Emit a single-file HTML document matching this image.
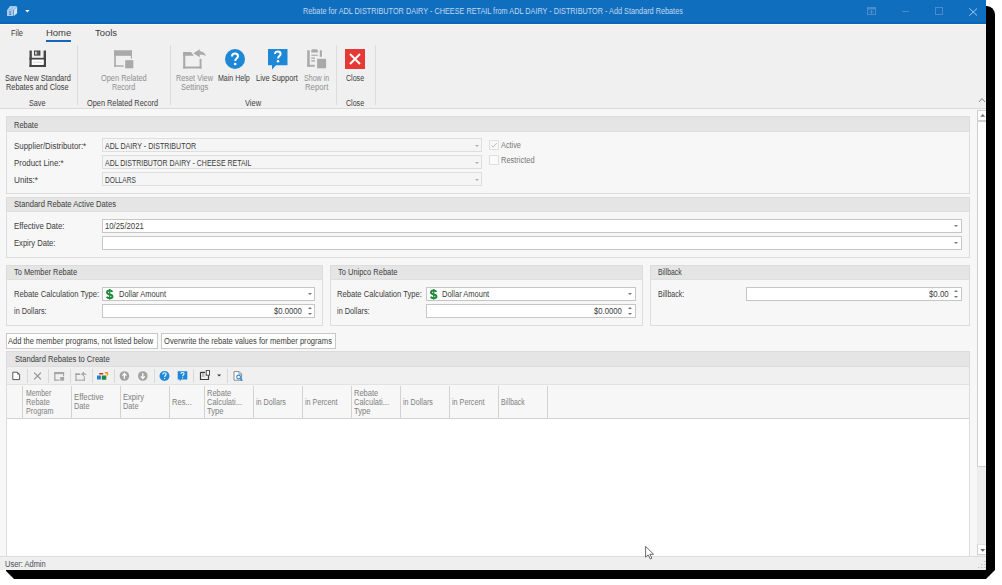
<!DOCTYPE html>
<html><head><meta charset="utf-8">
<style>
*{box-sizing:border-box;margin:0;padding:0}
html,body{width:1002px;height:585px;overflow:hidden;background:#fff}
body{position:relative;font-family:"Liberation Sans",sans-serif;font-size:7.6px;color:#3c3c3c}
.a{position:absolute}
.t{position:absolute;white-space:nowrap;line-height:1;transform-origin:0 0}
#win{position:absolute;left:0;top:0;width:986px;height:570px;background:#f7f7f7;overflow:hidden}
#shadow{position:absolute;left:0;top:0;width:1002px;height:585px;background:#000;clip-path:polygon(6px 6px,987px 6px,990px 6.8px,992.5px 8.5px,994.2px 11px,995px 14px,995px 570px,986px 579px,14px 579px,6px 571px)}
#title{position:absolute;left:0;top:0;width:986px;height:22px;background:#106ebe}
#title2{position:absolute;left:0;top:22px;width:986px;height:2px;background:#0a66ba}
#title3{position:absolute;left:0;top:24px;width:986px;height:1px;background:#fcf7ef}
#ribbon{position:absolute;left:0;top:25px;width:986px;height:83px;background:#f0f0f0}
#ribline{position:absolute;left:0;top:108px;width:986px;height:1px;background:#dadada}
.sep{position:absolute;top:45px;width:1px;height:60px;background:#dcdcdc}
.rl{color:#3c3c3c;font-size:7.5px}
.dis{color:#a2a2a2}
.grp{position:absolute;background:#f7f7f7;border:1px solid #dcdcdc}
.gh{position:absolute;left:0;top:0;right:0;height:15px;background:#e5e5e5;border-bottom:1px solid #dedede}
.gh span{position:absolute;left:7px;top:4px;white-space:nowrap;line-height:1;color:#3c3c3c}
.inp{position:absolute;background:#fff;border:1px solid #c6c6c6;height:14px}
.ro{background:#f5f5f5;border-color:#dedede}
.inp span{position:absolute;top:3px;white-space:nowrap;line-height:1;color:#3c3c3c}
.arr{position:absolute;width:0;height:0;border-left:2.5px solid transparent;border-right:2.5px solid transparent;border-top:2.5px solid #777}
.btn{position:absolute;height:16px;background:#fff;border:1px solid #c8c8c8}
.btn span{position:absolute;left:2px;top:4px;white-space:nowrap;line-height:1;color:#3c3c3c}
.inp span.dol{font-weight:bold;color:#1c8c3c;font-size:11px}
.hdr{color:#8a8a8a}
.lbl{position:absolute;white-space:nowrap;line-height:1;color:#4a4a4a}
</style></head><body>
<div id="shadow"></div>
<div id="win">
  <div id="title"></div><div id="title2"></div><div id="title3"></div>
  <div id="ribbon"></div><div id="ribline"></div>
  <!-- title bar icons -->
  <svg class="a" style="left:0;top:0" width="40" height="25" viewBox="0 0 40 25">
    <path d="M7 10 L10 6 H17.1 L14 10 Z" fill="#8fbce9"/>
    <path d="M8.2 9.2 L10.6 6.4 H12.6 L10.2 9.2 Z M11.8 9.2 L14.2 6.4 H16.2 L13.8 9.2 Z" fill="#b9d6f3"/>
    <path d="M13.9 10 L17.1 6.5 V13.3 L13.9 16 Z" fill="#cfe3f7"/>
    <rect x="7" y="10" width="6.4" height="6" fill="#a9cbee"/>
    <path d="M9.2 11.2 h1.8 v1.3 h-1.2 v0.8 h1.2 v1.6 h-1.8 v-1.2 h1.2 v-0.6 h-1.2 Z" fill="#3f86cf"/>
    <path d="M25.2 10 H29.6 L27.4 12.4 Z" fill="#fff"/>
  </svg>
  
  <svg class="a" style="left:867px;top:7px" width="9" height="8" viewBox="0 0 9 8"><rect x="0.5" y="0.5" width="8" height="7" fill="none" stroke="#4d8acb" stroke-width="1"/><rect x="0.5" y="0.5" width="8" height="2" fill="#4d8acb"/><path d="M4.5 3 v4 M2.5 5 h4" stroke="#4d8acb" stroke-width="1"/></svg>
  <div class="a" style="left:902px;top:11px;width:7px;height:1px;background:#4d8acb"></div>
  <div class="a" style="left:935px;top:7px;width:8px;height:8px;border:1px solid #4d8acb"></div>
  <svg class="a" style="left:968.5px;top:7.5px" width="8.5" height="8" viewBox="0 0 8.5 8"><path d="M0.3 0.3 L8.2 7.7 M8.2 0.3 L0.3 7.7" stroke="#b3cfec" stroke-width="0.9"/></svg>

  <!-- tabs -->
  <div class="a" style="left:46px;top:40px;width:25px;height:2px;background:#1565c0"></div>

  <!-- separators -->
  <div class="sep" style="left:77px"></div>
  <div class="sep" style="left:170px"></div>
  <div class="sep" style="left:336px"></div>
  <div class="sep" style="left:375px"></div>

  <!-- Save -->
  <svg class="a" style="left:25px;top:46px" width="25" height="25" viewBox="0 0 25 25"><g fill="#454545">
    <rect x="4.5" y="4.5" width="2.3" height="16.5"/><rect x="18.6" y="4.5" width="2.4" height="16.5"/>
    <rect x="4.5" y="11.8" width="16.5" height="1.9"/><rect x="4.5" y="18.8" width="16.5" height="2.2"/>
    <rect x="9" y="4.5" width="6.4" height="5.1"/></g>
    <rect x="6.8" y="13.7" width="11.8" height="5.1" fill="#fff"/><rect x="8" y="15.8" width="9" height="0.8" fill="#d0d0d0"/>
    <rect x="10.2" y="5.6" width="1.4" height="2.9" fill="#fff"/><rect x="12.4" y="5.6" width="1.2" height="2.9" fill="#777"/>
  </svg>

  <!-- Open Related -->
  <svg class="a" style="left:110px;top:45px" width="25" height="25" viewBox="0 0 25 25"><g fill="#a9a9a9">
    <rect x="4.2" y="5.3" width="17.7" height="5.5"/><rect x="4.2" y="5.3" width="1.6" height="16.4"/>
    <rect x="4.2" y="20.3" width="9.4" height="1.4"/><rect x="20.8" y="5.3" width="1.1" height="8.3"/>
    <rect x="15.2" y="15.2" width="8.1" height="8.1"/></g>
  </svg>

  <!-- Reset View -->
  <svg class="a" style="left:180px;top:45px" width="30" height="27" viewBox="0 0 30 27"><g fill="#a9a9a9">
    <rect x="3.2" y="6.9" width="2.1" height="16.6"/><rect x="3.2" y="21.5" width="18.3" height="2"/>
    <rect x="19.6" y="13.8" width="1.9" height="9.7"/><path d="M3.2 6.9 H11 L13.8 10.8 H3.2 Z"/>
    <path d="M13.4 8.3 L19.8 4.2 V12.2 Z"/><path d="M19.5 6.3 C23 6.3 25.5 8.5 25.8 11.3 C24 9.8 22 9.5 19.5 9.8 Z"/></g>
  </svg>

  <!-- Main Help -->
  <svg class="a" style="left:225px;top:49px" width="20" height="20" viewBox="0 0 20 20">
    <circle cx="10" cy="10" r="10" fill="#1e88d6"/>
    <path d="M7 7.5 C7 5.5 8.3 4.5 10 4.5 C11.8 4.5 13 5.6 13 7.2 C13 9.3 10.2 9.5 10.2 12" fill="none" stroke="#fff" stroke-width="2"/>
    <circle cx="10.2" cy="15" r="1.3" fill="#fff"/>
  </svg>

  <!-- Live Support -->
  <svg class="a" style="left:268px;top:49px" width="20" height="21" viewBox="0 0 20 21">
    <path d="M0 0 H19.5 V16.3 H8 L4 20.5 L4 16.3 H0 Z" fill="#1e88d6"/>
    <path d="M7 5 C7 3.2 8.2 2.5 9.8 2.5 C11.5 2.5 12.6 3.5 12.6 5 C12.6 7 10 7.2 10 9.5" fill="none" stroke="#fff" stroke-width="1.9"/>
    <circle cx="10" cy="12.3" r="1.2" fill="#fff"/>
  </svg>

  <!-- Show in Report -->
  <svg class="a" style="left:303px;top:45px" width="30" height="27" viewBox="0 0 30 27"><g fill="#a9a9a9">
    <rect x="4.2" y="5.3" width="2.5" height="16.4"/><rect x="4.2" y="19.8" width="7.6" height="1.9"/>
    <path d="M8.3 7.6 V5.6 Q8.3 4.2 10 4.2 H13.1 Q14.8 4.2 14.8 5.6 V7.6 Z"/>
    <rect x="8.3" y="9.7" width="6.5" height="1.1"/><rect x="8.3" y="12.5" width="3.7" height="1.3"/><rect x="8.3" y="15.2" width="3.7" height="1.4"/>
    <rect x="16.8" y="5.3" width="2.1" height="6.5"/><rect x="14.1" y="13.8" width="9" height="9.5"/></g>
  </svg>

  <!-- Close -->
  <svg class="a" style="left:345px;top:49px" width="20" height="20" viewBox="0 0 20 20">
    <rect width="20" height="20" fill="#e53935"/>
    <path d="M5 5 L15 15 M15 5 L5 15" stroke="#fff" stroke-width="2"/>
  </svg>

  <svg class="a" style="left:978px;top:97px" width="8" height="6" viewBox="0 0 8 6"><path d="M1 5 L4 1.5 L7 5" fill="none" stroke="#888" stroke-width="1"/></svg>

  <!-- scrollbar -->
    <div class="a" style="left:977px;top:110px;width:9px;height:446px;background:#ededed"></div>
  <div class="a" style="left:977px;top:110px;width:9px;height:11px;background:#fff;border:1px solid #cfcfcf;border-right:0"></div>
  <svg class="a" style="left:977px;top:110px" width="9" height="11" viewBox="977 110 9 11"><path d="M980.3 116.8 H985.2 L982.75 114 Z" fill="#6a6a6a"/></svg>
  <div class="a" style="left:977px;top:121px;width:9px;height:346px;background:#fff;border:1px solid #cfcfcf;border-right:0"></div>
  <div class="a" style="left:977px;top:544px;width:9px;height:11px;background:#fff;border:1px solid #d0d0d0;border-right:0;border-top-color:#e0e0e0"></div>
  <svg class="a" style="left:977px;top:544px" width="9" height="11" viewBox="977 544 9 11"><path d="M980.3 549 H985.2 L982.75 551.8 Z" fill="#6a6a6a"/></svg>

  <!-- Group 1 Rebate -->
  <div class="grp" style="left:6px;top:116px;width:964px;height:78px"><div class="gh"></div></div>
  <div class="inp ro" style="left:102px;top:138px;width:380px"><div class="arr" style="left:371.5px;top:6px;border-top-color:#b0b0b0;border-left-width:2px;border-right-width:2px;border-top-width:2px"></div></div>
  <div class="inp ro" style="left:102px;top:155px;width:380px"><div class="arr" style="left:371.5px;top:6px;border-top-color:#b0b0b0;border-left-width:2px;border-right-width:2px;border-top-width:2px"></div></div>
  <div class="inp ro" style="left:102px;top:172px;width:380px"><div class="arr" style="left:371.5px;top:6px;border-top-color:#b0b0b0;border-left-width:2px;border-right-width:2px;border-top-width:2px"></div></div>
  <div class="a" style="left:489px;top:140px;width:10px;height:10px;background:#f7f7f7;border:1px solid #e0e0e0"></div>
  <svg class="a" style="left:490px;top:141px" width="8" height="8" viewBox="0 0 8 8"><path d="M1.5 4.5 L3.2 6 L6.8 2" fill="none" stroke="#b5b5b5" stroke-width="0.9"/></svg>
  <div class="a" style="left:489px;top:155px;width:10px;height:10px;background:#fbfbfb;border:1px solid #e0e0e0"></div>

  <!-- Group 2 Dates -->
  <div class="grp" style="left:6px;top:197px;width:964px;height:61px"><div class="gh" style="height:14px"></div></div>
  <div class="inp" style="left:102px;top:219px;width:860px"><div class="arr" style="left:851px;top:5.3px"></div></div>
  <div class="inp" style="left:102px;top:236px;width:860px"><div class="arr" style="left:851px;top:5.3px"></div></div>

  <!-- Group 3 -->
  <div class="grp" style="left:6px;top:265px;width:317px;height:61px"><div class="gh" style="height:14px"></div></div>
  <div class="inp" style="left:102px;top:287px;width:213px"><div class="arr" style="left:204.5px;top:5.3px"></div></div>
  <div class="inp" style="left:102px;top:304px;width:213px"><div class="arr" style="left:204.5px;top:2px;border-top:0;border-bottom:2px solid #777"></div><div class="arr" style="left:204.5px;top:8px;border-top-width:2px"></div></div>

  <svg class="a" style="left:104px;top:287.6px" width="12" height="13" viewBox="104 287.6 12 13"><path d="M112.4 291.5 C111.9 290.5 111 290.1 109.7 290.1 C108 290.1 107 290.90000000000003 107 292.1 C107 293.40000000000003 108.2 293.70000000000005 109.7 294.0 C111.3 294.3 112.5 294.8 112.5 296.1 C112.5 297.3 111.4 297.90000000000003 109.7 297.90000000000003 C108.3 297.90000000000003 107.3 297.40000000000003 106.7 296.40000000000003" fill="none" stroke="#1f8b3b" stroke-width="2"/><path d="M109.7 288.6 V299.1" stroke="#1f8b3b" stroke-width="1.3"/></svg>
  <!-- Group 4 -->
  <div class="grp" style="left:330px;top:265px;width:313px;height:61px"><div class="gh" style="height:14px"></div></div>
  <div class="inp" style="left:426px;top:287px;width:210px"><div class="arr" style="left:201px;top:5.3px"></div></div>
  <div class="inp" style="left:426px;top:304px;width:210px"><div class="arr" style="left:201px;top:2px;border-top:0;border-bottom:2px solid #777"></div><div class="arr" style="left:201px;top:8px;border-top-width:2px"></div></div>

  <svg class="a" style="left:428px;top:287.6px" width="12" height="13" viewBox="428 287.6 12 13"><path d="M436.4 291.5 C435.9 290.5 435 290.1 433.7 290.1 C432 290.1 431 290.90000000000003 431 292.1 C431 293.40000000000003 432.2 293.70000000000005 433.7 294.0 C435.3 294.3 436.5 294.8 436.5 296.1 C436.5 297.3 435.4 297.90000000000003 433.7 297.90000000000003 C432.3 297.90000000000003 431.3 297.40000000000003 430.7 296.40000000000003" fill="none" stroke="#1f8b3b" stroke-width="2"/><path d="M433.7 288.6 V299.1" stroke="#1f8b3b" stroke-width="1.3"/></svg>
  <!-- Group 5 -->
  <div class="grp" style="left:650px;top:265px;width:320px;height:61px"><div class="gh" style="height:14px"></div></div>
  <div class="inp" style="left:746px;top:287px;width:216px"><div class="arr" style="left:207px;top:2px;border-top:0;border-bottom:2px solid #777"></div><div class="arr" style="left:207px;top:8px;border-top-width:2px"></div></div>

  <!-- buttons -->
  <div class="btn" style="left:6px;top:333px;width:152px"></div>
  <div class="btn" style="left:161px;top:333px;width:175px"></div>

  <!-- Grid group -->
  <div class="grp" style="left:6px;top:351px;width:964px;height:206px;background:#fff"><div class="gh"></div></div>
  <div class="a" style="left:7px;top:367px;width:962px;height:18px;background:#f0f0f0;border-bottom:1px solid #e2e2e2"></div>
  <div class="a" style="left:7px;top:385px;width:962px;height:34px;background:#f7f7f7;border-bottom:1px solid #d2d2d2"></div>

  <!-- columns -->
  <div class="a" style="left:22px;top:386px;width:1px;height:32px;background:#d2d2d2"></div>
  <div class="a" style="left:71px;top:386px;width:1px;height:32px;background:#d2d2d2"></div>
  <div class="a" style="left:120px;top:386px;width:1px;height:32px;background:#d2d2d2"></div>
  <div class="a" style="left:169px;top:386px;width:1px;height:32px;background:#d2d2d2"></div>
  <div class="a" style="left:204px;top:386px;width:1px;height:32px;background:#d2d2d2"></div>
  <div class="a" style="left:253px;top:386px;width:1px;height:32px;background:#d2d2d2"></div>
  <div class="a" style="left:302px;top:386px;width:1px;height:32px;background:#d2d2d2"></div>
  <div class="a" style="left:351px;top:386px;width:1px;height:32px;background:#d2d2d2"></div>
  <div class="a" style="left:400px;top:386px;width:1px;height:32px;background:#d2d2d2"></div>
  <div class="a" style="left:449px;top:386px;width:1px;height:32px;background:#d2d2d2"></div>
  <div class="a" style="left:498px;top:386px;width:1px;height:32px;background:#d2d2d2"></div>
  <div class="a" style="left:547px;top:386px;width:1px;height:32px;background:#d2d2d2"></div>
  <div class="a" style="left:27px;top:369px;width:1px;height:14px;background:#d9d9d9"></div>
  <div class="a" style="left:48px;top:369px;width:1px;height:14px;background:#d9d9d9"></div>
  <div class="a" style="left:70px;top:369px;width:1px;height:14px;background:#d9d9d9"></div>
  <div class="a" style="left:92px;top:369px;width:1px;height:14px;background:#d9d9d9"></div>
  <div class="a" style="left:114px;top:369px;width:1px;height:14px;background:#d9d9d9"></div>
  <div class="a" style="left:154px;top:369px;width:1px;height:14px;background:#d9d9d9"></div>
  <div class="a" style="left:193px;top:369px;width:1px;height:14px;background:#d9d9d9"></div>
  <div class="a" style="left:227px;top:369px;width:1px;height:14px;background:#d9d9d9"></div>

  <!-- toolbar icons -->
  <svg class="a" style="left:0;top:366px" width="250" height="20" viewBox="0 366 250 20">
    <path d="M12.8 372.2 H17.4 L19.6 374.4 V379.6 H12.8 Z" fill="#fff" stroke="#505050" stroke-width="0.95" stroke-linejoin="round"/>
    <path d="M17.3 371.9 L19.9 374.5 H17.3 Z" fill="#505050"/>
    <path d="M34.2 372.6 L40.9 379.3 M40.9 372.6 L34.2 379.3" stroke="#8c8c8c" stroke-width="1.1"/>
    <g fill="#a6a6a6">
      <rect x="54.2" y="372" width="9.9" height="2.1"/><rect x="54.2" y="372" width="1.3" height="8.7"/>
      <rect x="54.2" y="379.5" width="5.3" height="1.2"/><rect x="63" y="372" width="1.1" height="4.3"/>
      <rect x="60.2" y="377" width="3.9" height="3.7"/>
      <rect x="75.4" y="373.5" width="1.2" height="7.2"/><rect x="75.4" y="379.6" width="9.5" height="1.1"/>
      <rect x="83.8" y="376.2" width="1.1" height="4.5"/><path d="M75.4 373.3 H79.5 L80.8 375.1 H75.4 Z"/>
      <path d="M81 374.1 L84 371.4 V376.6 Z"/><path d="M83.8 372.9 C85.5 372.9 86.5 373.8 86.6 375.6 C85.8 374.8 85 374.6 83.8 374.6 Z"/>
    </g>
    <rect x="97" y="375.6" width="3.9" height="3.9" rx="0.5" fill="#1e7fd6"/>
    <rect x="101.8" y="375.6" width="4.5" height="4.2" rx="0.5" fill="#1f8a3a"/>
    <rect x="99.1" y="372.9" width="4.2" height="1.5" rx="0.7" fill="#e02020"/>
    <path d="M104.8 372 H108.1 V375.6 H106.7 V373.4 H104.8 Z" fill="#f7931e"/>
    <circle cx="124.4" cy="376" r="4.8" fill="#a3a3a3"/>
    <path d="M124.4 378.8 V374 M122.4 375.6 L124.4 373.4 L126.4 375.6" fill="none" stroke="#fff" stroke-width="1.3"/>
    <circle cx="142.8" cy="376" r="4.8" fill="#a3a3a3"/>
    <path d="M142.8 373.2 V378 M140.8 376.4 L142.8 378.6 L144.8 376.4" fill="none" stroke="#fff" stroke-width="1.3"/>
    <circle cx="164.5" cy="376" r="5" fill="#1e88d6"/>
    <path d="M162.8 374.6 C162.8 373.4 163.6 372.8 164.5 372.8 C165.5 372.8 166.2 373.4 166.2 374.3 C166.2 375.5 164.6 375.6 164.6 377.1" fill="none" stroke="#fff" stroke-width="1.1"/>
    <circle cx="164.6" cy="378.6" r="0.7" fill="#fff"/>
    <path d="M177.7 371.2 H187.3 V379.6 H181.3 L179.8 381.2 V379.6 H177.7 Z" fill="#1e88d6"/>
    <path d="M180.9 373.9 C180.9 372.9 181.6 372.4 182.5 372.4 C183.4 372.4 184.1 373 184.1 373.8 C184.1 374.9 182.6 375 182.6 376.3" fill="none" stroke="#fff" stroke-width="1.05"/>
    <circle cx="182.6" cy="377.8" r="0.65" fill="#fff"/>
    <path d="M200.5 372.3 H205 M200.5 372.3 V379.5 H208.5 V375.2" fill="none" stroke="#3a3a3a" stroke-width="1.2"/>
    <rect x="206.2" y="370.6" width="3.3" height="4.6" fill="#fff" stroke="#3a3a3a" stroke-width="0.9"/>
    <path d="M202 374 H204.5 M202 376 H204.5" stroke="#777" stroke-width="0.8"/>
    <path d="M217.2 374.4 H221.1 L219.15 376.6 Z" fill="#333"/>
    <path d="M234 371.6 H239.2 L241.6 374 V380.2 H234 Z" fill="#fff" stroke="#8a8a8a" stroke-width="1"/>
    <path d="M239 371.6 V374.2 H241.6" fill="none" stroke="#8a8a8a" stroke-width="0.8"/>
    <circle cx="238.6" cy="377" r="1.9" fill="none" stroke="#2a8ad8" stroke-width="1.1"/>
    <path d="M240 378.4 L242.3 380.7" stroke="#2a8ad8" stroke-width="1.3"/>
  </svg>



  <!-- status bar -->
  <div class="a" style="left:0;top:556px;width:986px;height:14px;background:#efefef;border-top:1px solid #dcdcdc"></div>
  <!-- grip -->
  <svg class="a" style="left:970px;top:556px" width="16" height="14" viewBox="970 556 16 14"><g fill="#b0b0b0">
    <rect x="984.4" y="561" width="1" height="1"/><rect x="981.4" y="564" width="1" height="1"/><rect x="984.4" y="564" width="1" height="1"/>
    <rect x="978.2" y="567" width="1" height="1"/><rect x="981.4" y="567" width="1" height="1"/><rect x="984.4" y="567" width="1" height="1"/></g></svg>

  <!-- cursor -->
  <svg class="a" style="left:640px;top:540px;z-index:5" width="20" height="22" viewBox="640 540 20 22"><path d="M645.6 546.4 V557.2 L648.1 554.9 L650.3 559 L651.9 558.2 L649.8 554.3 H653.6 Z" fill="#fff" stroke="#5a5a5a" stroke-width="0.9" stroke-linejoin="round"/></svg>
  <div class="t" style="left:303.00px;top:7.12px;font-size:8.6px;transform:scaleX(0.8482);color:#c2d8f0">Rebate for ADL DISTRIBUTOR DAIRY - CHEESE RETAIL from ADL DAIRY - DISTRIBUTOR - Add Standard Rebates</div>
  <div class="t" style="left:10.60px;top:29.40px;font-size:9.1px;transform:scaleX(0.8133);color:#3b3b3b">File</div>
  <div class="t" style="left:46.00px;top:29.40px;font-size:9.1px;transform:scaleX(1.0417);color:#3b3b3b">Home</div>
  <div class="t" style="left:95.10px;top:29.40px;font-size:9.1px;transform:scaleX(1.0333);color:#3b3b3b">Tools</div>
  <div class="t" style="left:4.70px;top:74.17px;font-size:8.3px;transform:scaleX(0.8919);color:#3b3b3b">Save New Standard</div>
  <div class="t" style="left:5.70px;top:83.07px;font-size:8.3px;transform:scaleX(0.8859);color:#3b3b3b">Rebates and Close</div>
  <div class="t" style="left:29.00px;top:99.07px;font-size:8.3px;transform:scaleX(0.8684);color:#3b3b3b">Save</div>
  <div class="t" style="left:100.50px;top:74.17px;font-size:8.3px;transform:scaleX(0.8922);color:#8f8f8f">Open Related</div>
  <div class="t" style="left:111.50px;top:83.07px;font-size:8.3px;transform:scaleX(0.8704);color:#8f8f8f">Record</div>
  <div class="t" style="left:87.20px;top:99.07px;font-size:8.3px;transform:scaleX(0.8852);color:#3b3b3b">Open Related Record</div>
  <div class="t" style="left:175.70px;top:74.17px;font-size:8.3px;transform:scaleX(0.8833);color:#8f8f8f">Reset View</div>
  <div class="t" style="left:180.80px;top:83.07px;font-size:8.3px;transform:scaleX(0.9067);color:#8f8f8f">Settings</div>
  <div class="t" style="left:218.40px;top:74.17px;font-size:8.3px;transform:scaleX(0.8500);color:#3b3b3b">Main Help</div>
  <div class="t" style="left:244.80px;top:99.07px;font-size:8.3px;transform:scaleX(0.9000);color:#3b3b3b">View</div>
  <div class="t" style="left:256.20px;top:74.17px;font-size:8.3px;transform:scaleX(0.8979);color:#3b3b3b">Live Support</div>
  <div class="t" style="left:303.80px;top:74.17px;font-size:8.3px;transform:scaleX(0.8533);color:#8f8f8f">Show in</div>
  <div class="t" style="left:305.10px;top:83.07px;font-size:8.3px;transform:scaleX(0.9360);color:#8f8f8f">Report</div>
  <div class="t" style="left:346.00px;top:74.17px;font-size:8.3px;transform:scaleX(0.8524);color:#3b3b3b">Close</div>
  <div class="t" style="left:346.00px;top:99.07px;font-size:8.3px;transform:scaleX(0.8524);color:#3b3b3b">Close</div>
  <div class="t" style="left:14.00px;top:120.57px;font-size:8.3px;transform:scaleX(0.9000);color:#3b3b3b">Rebate</div>
  <div class="t" style="left:13.50px;top:142.07px;font-size:8.3px;transform:scaleX(0.9487);color:#3b3b3b">Supplier/Distributor:*</div>
  <div class="t" style="left:13.50px;top:158.87px;font-size:8.3px;transform:scaleX(0.9519);color:#3b3b3b">Product Line:*</div>
  <div class="t" style="left:13.50px;top:175.67px;font-size:8.3px;transform:scaleX(0.9840);color:#3b3b3b">Units:*</div>
  <div class="t" style="left:104.60px;top:142.07px;font-size:8.3px;transform:scaleX(0.8533);color:#3b3b3b">ADL DAIRY - DISTRIBUTOR</div>
  <div class="t" style="left:104.60px;top:158.87px;font-size:8.3px;transform:scaleX(0.8425);color:#3b3b3b">ADL DISTRIBUTOR DAIRY - CHEESE RETAIL</div>
  <div class="t" style="left:104.60px;top:175.67px;font-size:8.3px;transform:scaleX(0.7974);color:#3b3b3b">DOLLARS</div>
  <div class="t" style="left:500.50px;top:141.07px;font-size:8.3px;transform:scaleX(0.8826);color:#767676">Active</div>
  <div class="t" style="left:500.50px;top:156.37px;font-size:8.3px;transform:scaleX(0.8974);color:#767676">Restricted</div>
  <div class="t" style="left:14.40px;top:200.27px;font-size:8.3px;transform:scaleX(0.9171);color:#3b3b3b">Standard Rebate Active Dates</div>
  <div class="t" style="left:13.60px;top:222.27px;font-size:8.3px;transform:scaleX(0.9389);color:#3b3b3b">Effective Date:</div>
  <div class="t" style="left:13.60px;top:239.07px;font-size:8.3px;transform:scaleX(0.9178);color:#3b3b3b">Expiry Date:</div>
  <div class="t" style="left:105.40px;top:222.27px;font-size:8.3px;transform:scaleX(0.9341);color:#3b3b3b">10/25/2021</div>
  <div class="t" style="left:14.40px;top:268.07px;font-size:8.3px;transform:scaleX(0.8930);color:#3b3b3b">To Member Rebate</div>
  <div class="t" style="left:13.60px;top:290.27px;font-size:8.3px;transform:scaleX(0.9196);color:#3b3b3b">Rebate Calculation Type:</div>
  <div class="t" style="left:13.60px;top:306.97px;font-size:8.3px;transform:scaleX(0.8838);color:#3b3b3b">in Dollars:</div>
  <div class="t" style="left:118.80px;top:290.37px;font-size:8.3px;transform:scaleX(0.9019);color:#3b3b3b">Dollar Amount</div>
  <div class="t" style="left:274.00px;top:307.17px;font-size:8.3px;transform:scaleX(0.9300);color:#3b3b3b">$0.0000</div>
  <div class="t" style="left:338.00px;top:268.07px;font-size:8.3px;transform:scaleX(0.9015);color:#3b3b3b">To Unipco Rebate</div>
  <div class="t" style="left:337.40px;top:290.27px;font-size:8.3px;transform:scaleX(0.9174);color:#3b3b3b">Rebate Calculation Type:</div>
  <div class="t" style="left:337.40px;top:306.97px;font-size:8.3px;transform:scaleX(0.8838);color:#3b3b3b">in Dollars:</div>
  <div class="t" style="left:442.20px;top:290.37px;font-size:8.3px;transform:scaleX(0.9058);color:#3b3b3b">Dollar Amount</div>
  <div class="t" style="left:594.20px;top:307.17px;font-size:8.3px;transform:scaleX(0.9300);color:#3b3b3b">$0.0000</div>
  <div class="t" style="left:658.20px;top:267.97px;font-size:8.3px;transform:scaleX(0.8276);color:#3b3b3b">Billback</div>
  <div class="t" style="left:657.80px;top:290.17px;font-size:8.3px;transform:scaleX(0.8484);color:#3b3b3b">Billback:</div>
  <div class="t" style="left:928.80px;top:290.37px;font-size:8.3px;transform:scaleX(0.9476);color:#3b3b3b">$0.00</div>
  <div class="t" style="left:8.20px;top:336.87px;font-size:8.3px;transform:scaleX(0.9043);color:#3b3b3b">Add the member programs, not listed below</div>
  <div class="t" style="left:163.60px;top:336.87px;font-size:8.3px;transform:scaleX(0.9152);color:#3b3b3b">Overwrite the rebate values for member programs</div>
  <div class="t" style="left:14.50px;top:354.87px;font-size:8.3px;transform:scaleX(0.9165);color:#3b3b3b">Standard Rebates to Create</div>
  <div class="t" style="left:25.60px;top:389.17px;font-size:8.3px;transform:scaleX(0.8290);color:#808080">Member</div>
  <div class="t" style="left:25.60px;top:397.87px;font-size:8.3px;transform:scaleX(0.8889);color:#808080">Rebate</div>
  <div class="t" style="left:25.60px;top:406.57px;font-size:8.3px;transform:scaleX(0.8656);color:#808080">Program</div>
  <div class="t" style="left:74.40px;top:393.27px;font-size:8.3px;transform:scaleX(0.9344);color:#808080">Effective</div>
  <div class="t" style="left:74.40px;top:402.17px;font-size:8.3px;transform:scaleX(0.8833);color:#808080">Date</div>
  <div class="t" style="left:123.40px;top:393.27px;font-size:8.3px;transform:scaleX(0.9130);color:#808080">Expiry</div>
  <div class="t" style="left:123.40px;top:402.17px;font-size:8.3px;transform:scaleX(0.8833);color:#808080">Date</div>
  <div class="t" style="left:172.00px;top:398.37px;font-size:8.3px;transform:scaleX(0.9143);color:#808080">Res...</div>
  <div class="t" style="left:207.30px;top:389.17px;font-size:8.3px;transform:scaleX(0.9074);color:#808080">Rebate</div>
  <div class="t" style="left:207.30px;top:397.87px;font-size:8.3px;transform:scaleX(0.9026);color:#808080">Calculati...</div>
  <div class="t" style="left:207.30px;top:406.57px;font-size:8.3px;transform:scaleX(0.9167);color:#808080">Type</div>
  <div class="t" style="left:256.00px;top:398.17px;font-size:8.3px;transform:scaleX(0.8629);color:#808080">in Dollars</div>
  <div class="t" style="left:304.70px;top:398.17px;font-size:8.3px;transform:scaleX(0.8684);color:#808080">in Percent</div>
  <div class="t" style="left:354.40px;top:389.17px;font-size:8.3px;transform:scaleX(0.9074);color:#808080">Rebate</div>
  <div class="t" style="left:354.40px;top:397.87px;font-size:8.3px;transform:scaleX(0.9026);color:#808080">Calculati...</div>
  <div class="t" style="left:354.40px;top:406.57px;font-size:8.3px;transform:scaleX(0.9167);color:#808080">Type</div>
  <div class="t" style="left:403.40px;top:398.17px;font-size:8.3px;transform:scaleX(0.8629);color:#808080">in Dollars</div>
  <div class="t" style="left:452.40px;top:398.17px;font-size:8.3px;transform:scaleX(0.8684);color:#808080">in Percent</div>
  <div class="t" style="left:501.40px;top:398.17px;font-size:8.3px;transform:scaleX(0.8276);color:#808080">Billback</div>
  <div class="t" style="left:4.50px;top:559.57px;font-size:8.3px;transform:scaleX(0.9000);color:#4a4a56">User: Admin</div>
</div>
</body></html>
